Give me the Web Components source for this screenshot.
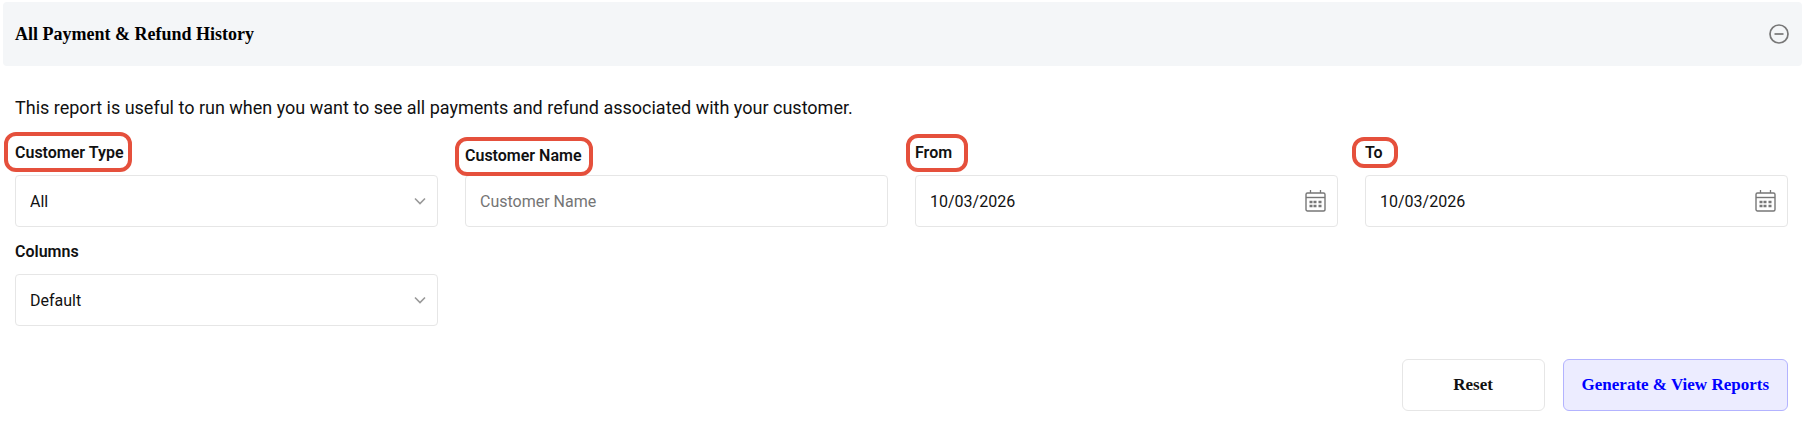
<!DOCTYPE html>
<html lang="en">
<head>
<meta charset="UTF-8">
<meta name="viewport" content="width=device-width, initial-scale=1.0">
<title>All Payment &amp; Refund History</title>
<style>
    body {
        --border-color: #e6e6e6;
        --text-color: #111111;
        --icon-color: #777777;
        --ring-color: #e5503c;
        --font-serif: "Liberation Serif", "Times New Roman", serif;
        margin: 0;
        padding: 2px 10px 28px 3px;
        background: #ffffff;
        color: var(--text-color);
        font-family: Roboto, sans-serif;
        font-size: 16px;
    }
</style>
</head>
<body>
<report-panel heading="All Payment &amp; Refund History">
    <span slot="description">This report is useful to run when you want to see all payments and refund associated with your customer.</span>
    <select-field label="Customer Type" options="All,Individual,Business" marked style="--ring: -9px -8px -7px -11px"></select-field>
    <text-field label="Customer Name" marked style="--ring: -7px -11px -8px -10px"></text-field>
    <date-field label="From" value="10/03/2026" marked style="--ring: -7px -16px -7px -9px"></date-field>
    <date-field label="To" value="10/03/2026" marked style="--ring: -4px -15px -3px -13px"></date-field>
    <select-field label="Columns" options="Default,Custom"></select-field>
    <action-button slot="actions">Reset</action-button>
    <action-button slot="actions" variant="primary">Generate &amp; View Reports</action-button>
</report-panel>

<script>
const fieldStyles = `
    :host {
        display: block;
        min-width: 0;
    }
    * {
        box-sizing: border-box;
    }
    .field {
        display: flex;
        flex-direction: column;
        align-items: flex-start;
        gap: var(--label-gap, 10px);
    }
    label {
        position: relative;
        font-weight: 600;
        line-height: 24px;
    }
    /* highlight ring drawn over the label */
    :host([marked]) label::after {
        content: '';
        position: absolute;
        inset: var(--ring);
        border: 4px solid var(--ring-color);
        border-radius: 12px;
        pointer-events: none;
    }
    .control {
        display: grid;
        align-items: center;
        width: 100%;
    }
    input, select {
        grid-area: 1 / 1;
        width: 100%;
        height: 52px;
        margin: 0;
        padding: 0 14px;
        border: 1px solid var(--border-color);
        border-radius: 4px;
        background: #ffffff;
        color: inherit;
        font: inherit;
        appearance: none;
    }
    input::placeholder {
        color: #757575;
        opacity: 1;
    }
    svg {
        display: block;
        fill: none;
        stroke: var(--icon-color);
    }
`;

class SelectField extends HTMLElement {
    constructor() {
        super();
        this.attachShadow({ mode: 'open' });
    }

    connectedCallback() {
        const options = this.getAttribute('options').split(',');
        this.shadowRoot.innerHTML = `
            <style>
                ${fieldStyles}
                select {
                    padding: 0 40px 0 14px;
                }
                svg {
                    grid-area: 1 / 1;
                    justify-self: end;
                    margin-right: 12px;
                    pointer-events: none;
                    stroke: #999999;
                }
            </style>
            <div class="field">
                <label for="control">${this.getAttribute('label')}</label>
                <div class="control">
                    <select id="control">${options.map(option => `<option>${option}</option>`).join('')}</select>
                    <svg width="12" height="8" viewBox="0 0 12 8" stroke-width="1.6"><path d="M1 1.5l5 5 5-5"/></svg>
                </div>
            </div>
        `;
    }
}

class TextField extends HTMLElement {
    constructor() {
        super();
        this.attachShadow({ mode: 'open' });
    }

    connectedCallback() {
        const label = this.getAttribute('label');
        this.shadowRoot.innerHTML = `
            <style>
                ${fieldStyles}
                :host {
                    --label-gap: 7px;
                }
            </style>
            <div class="field">
                <label for="control">${label}</label>
                <div class="control">
                    <input id="control" type="text" placeholder="${label}">
                </div>
            </div>
        `;
    }
}

class DateField extends HTMLElement {
    constructor() {
        super();
        this.attachShadow({ mode: 'open' });
    }

    connectedCallback() {
        this.shadowRoot.innerHTML = `
            <style>
                ${fieldStyles}
                input {
                    padding-right: 48px;
                }
                button {
                    grid-area: 1 / 1;
                    justify-self: end;
                    margin: 0 12px 0 0;
                    padding: 0;
                    border: none;
                    background: none;
                    cursor: pointer;
                }
            </style>
            <div class="field">
                <label for="control">${this.getAttribute('label')}</label>
                <div class="control">
                    <input id="control" type="text" value="${this.getAttribute('value')}">
                    <button type="button" aria-label="Open calendar">
                        <svg width="21" height="22" viewBox="0 0 21 22">
                            <rect x="1" y="3" width="19" height="18" rx="1.5" stroke-width="1.4"/>
                            <path d="M1 7.5h19" stroke-width="1.4"/>
                            <path d="M5.5 0v3M15.5 0v3" stroke-width="1.3"/>
                            <path d="M4.5 12h3M8.5 12h3M13.5 12h3M4.5 16h3M8.5 16h3M13.5 16h3" stroke-width="2.5"/>
                        </svg>
                    </button>
                </div>
            </div>
        `;
    }
}

class ActionButton extends HTMLElement {
    constructor() {
        super();
        this.attachShadow({ mode: 'open' });
        this.shadowRoot.innerHTML = `
            <style>
                :host {
                    display: block;
                }
                button {
                    box-sizing: border-box;
                    min-width: 143px;
                    height: 52px;
                    padding: 0 18px;
                    border: 1px solid var(--border-color);
                    border-radius: 6px;
                    background: #ffffff;
                    color: var(--text-color);
                    font: bold 17px var(--font-serif);
                    cursor: pointer;
                }
                :host([variant="primary"]) button {
                    border-color: #b3b3ff;
                    background: #ececff;
                    color: #0000ff;
                }
            </style>
            <button type="button"><slot></slot></button>
        `;
    }
}

class ReportPanel extends HTMLElement {
    constructor() {
        super();
        this.attachShadow({ mode: 'open' });
    }

    connectedCallback() {
        this.shadowRoot.innerHTML = `
            <style>
                :host {
                    display: block;
                }
                header {
                    display: flex;
                    align-items: center;
                    justify-content: space-between;
                    height: 64px;
                    padding: 0 13px 0 12px;
                    border-radius: 4px;
                    background: #f4f6f8;
                }
                h1 {
                    margin: 0;
                    color: #000000;
                    font: bold 18px var(--font-serif);
                }
                .toggle {
                    padding: 0;
                    border: none;
                    background: none;
                    cursor: pointer;
                }
                svg {
                    display: block;
                    fill: none;
                    stroke: var(--icon-color);
                }
                .content {
                    padding: 28px 14px 0 12px;
                }
                .content[hidden] {
                    display: none;
                }
                p {
                    margin: 0;
                    font-size: 18px;
                    line-height: 28px;
                }
                .fields {
                    display: grid;
                    grid-template-columns: repeat(4, minmax(0, 1fr));
                    align-items: end;
                    gap: 13px 27px;
                    margin-top: 19px;
                }
                .actions {
                    display: flex;
                    justify-content: flex-end;
                    gap: 18px;
                    margin-top: 33px;
                }
            </style>
            <header>
                <h1>${this.getAttribute('heading').replace('&', '&amp;')}</h1>
                <button class="toggle" type="button" aria-label="Toggle section" aria-expanded="true">
                    <svg width="20" height="20" viewBox="0 0 20 20" stroke-width="1.7"><circle cx="10" cy="10" r="9"/><path d="M5.5 10h9"/></svg>
                </button>
            </header>
            <div class="content">
                <p><slot name="description"></slot></p>
                <div class="fields"><slot></slot></div>
                <div class="actions"><slot name="actions"></slot></div>
            </div>
        `;

        const toggle = this.shadowRoot.querySelector('.toggle');
        const content = this.shadowRoot.querySelector('.content');
        toggle.addEventListener('click', () => {
            content.hidden = !content.hidden;
            toggle.setAttribute('aria-expanded', String(!content.hidden));
        });
    }
}

customElements.define('select-field', SelectField);
customElements.define('text-field', TextField);
customElements.define('date-field', DateField);
customElements.define('action-button', ActionButton);
customElements.define('report-panel', ReportPanel);
</script>
</body>
</html>
